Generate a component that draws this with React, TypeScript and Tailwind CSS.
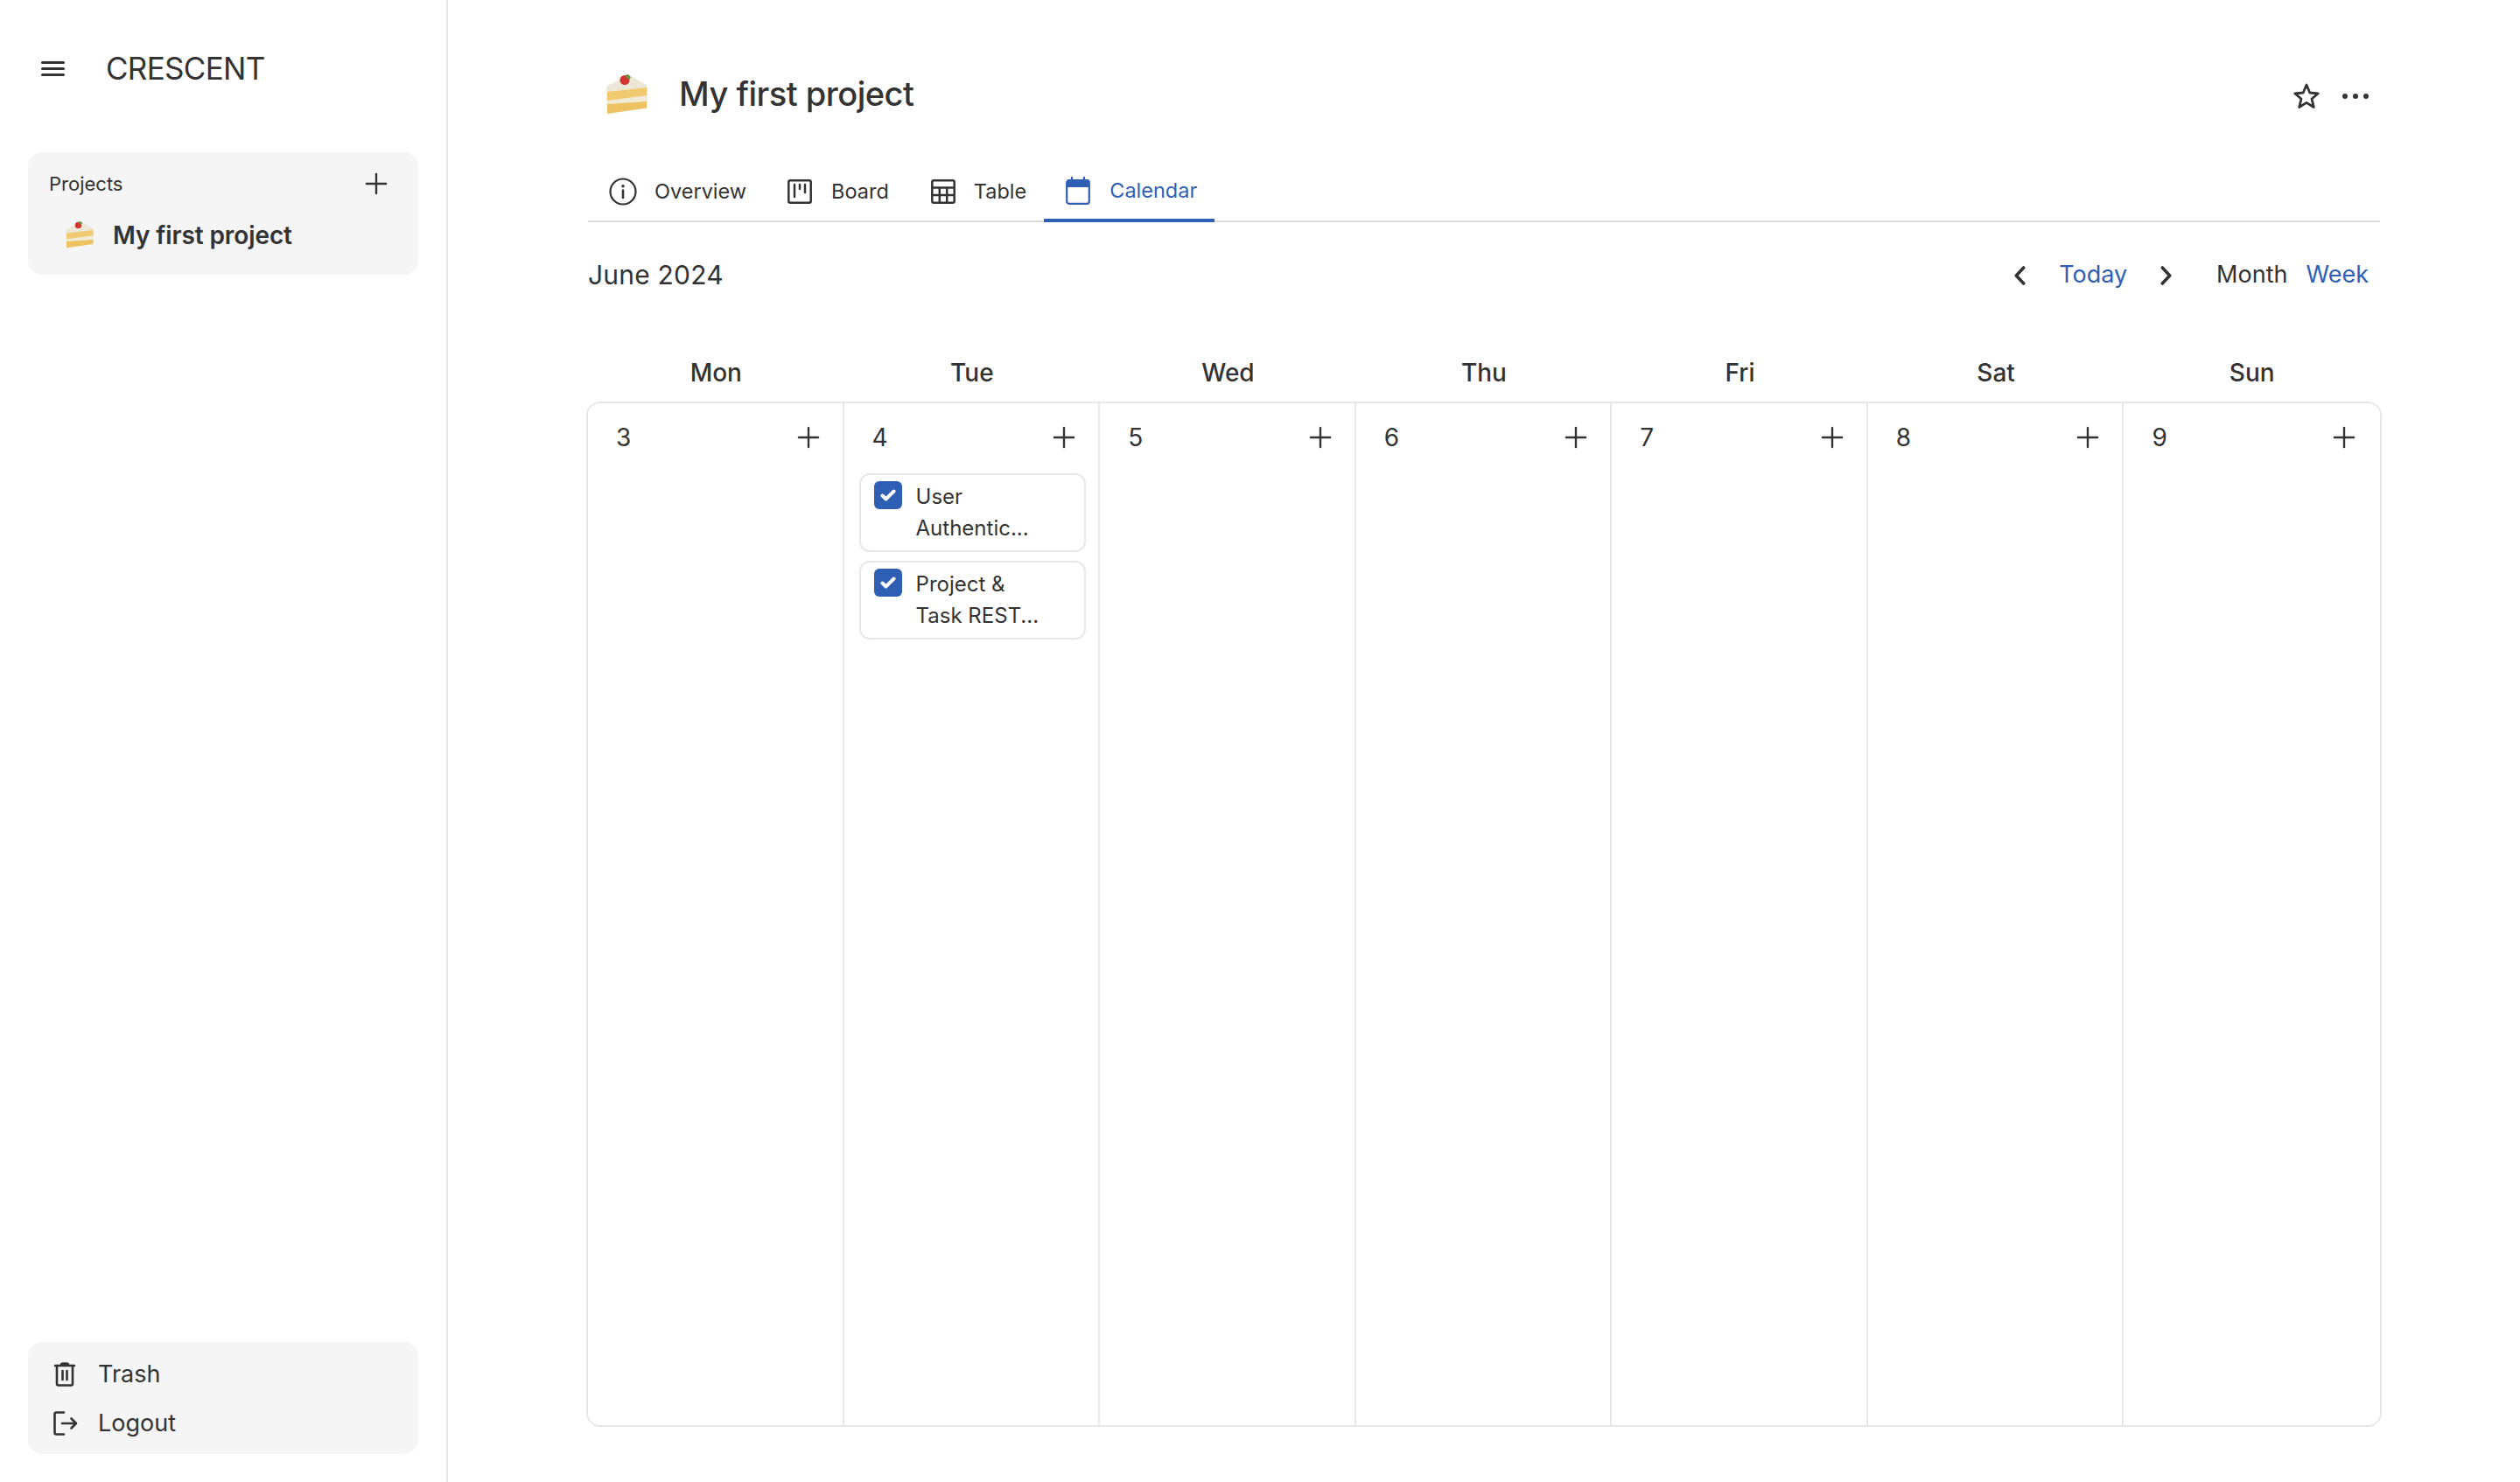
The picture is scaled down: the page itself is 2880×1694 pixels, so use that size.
import React from "react";
import { Plus } from "lucide-react";

const days = [
  { name: "Mon", date: 3 },
  { name: "Tue", date: 4 },
  { name: "Wed", date: 5 },
  { name: "Thu", date: 6 },
  { name: "Fri", date: 7 },
  { name: "Sat", date: 8 },
  { name: "Sun", date: 9 },
];

const tasks: Record<number, string[][]> = {
  4: [
    ["User", "Authentic..."],
    ["Project &", "Task REST..."],
  ],
};

function Cake({ className }: { className: string }) {
  return (
    <svg viewBox="0 0 48 46" className={className}>
      <path d="M0 14 L23 2 L30 3 L47 13 L47 38 L1 45 Z" fill="#f1ead4" />
      <path d="M0 14 L23 2 L30 3 L47 13 L46 15 L1 20 Z" fill="#ece7d6" />
      <path d="M1 20 L46 15 L46 24 L1 30 Z" fill="#f0c971" />
      <path d="M1 34 L46 31 L46 38.5 L1 45 Z" fill="#edc263" />
      <ellipse cx="21" cy="6.5" rx="5.5" ry="5.5" fill="#d2352d" />
      <path d="M21 1 L25 0 L28 3 L26 6 L23 4 Z" fill="#6b8f45" />
    </svg>
  );
}

function OverviewIcon() {
  return (
    <svg viewBox="0 0 32 32" className="w-8 h-8" fill="none" stroke="#333" strokeWidth="2.2" strokeLinecap="round">
      <circle cx="16" cy="16" r="14.5" />
      <path d="M16 14.5 V23" strokeWidth="2.6" />
      <circle cx="16" cy="9.8" r="0.7" fill="#333" />
    </svg>
  );
}

function BoardIcon() {
  return (
    <svg viewBox="0 0 28 28" className="w-7 h-7" fill="none" stroke="#333" strokeWidth="2.5" strokeLinecap="round" strokeLinejoin="round">
      <rect x="1.3" y="1.3" width="25.4" height="25.4" rx="2" />
      <path d="M8 6 V20 M14 6 V11 M20 6 V15" />
    </svg>
  );
}

function TableIcon() {
  return (
    <svg viewBox="0 0 28 28" className="w-7 h-7" fill="none" stroke="#333" strokeWidth="2.5" strokeLinejoin="round">
      <rect x="1.3" y="1.3" width="25.4" height="25.4" rx="2" />
      <path d="M1.3 9.5 H26.7 M1.3 18 H26.7 M9.8 9.5 V26.7 M18.2 9.5 V26.7" />
    </svg>
  );
}

function CalendarIcon() {
  return (
    <svg viewBox="0 0 28 32" className="w-7 h-8" fill="none">
      <rect x="1.2" y="4.2" width="25.6" height="26.6" rx="2.5" stroke="#2f5fb5" strokeWidth="2.2" />
      <path d="M1 7 Q1 3 4 3 H24 Q27 3 27 7 V12 H1 Z" fill="#2f5fb5" />
      <path d="M7 1 V4 M21 1 V4" stroke="#2f5fb5" strokeWidth="2.2" strokeLinecap="round" />
    </svg>
  );
}

function StarIcon() {
  return (
    <svg viewBox="0 0 30 30" className="w-[30px] h-[30px]" fill="none" stroke="#333" strokeWidth="2.8" strokeLinejoin="round">
      <path d="M15 2 L18.8 11 L28.3 11.8 L21 18 L23.3 27.5 L15 22.4 L6.7 27.5 L9 18 L1.7 11.8 L11.2 11 Z" />
    </svg>
  );
}

function Chevron({ dir }: { dir: "left" | "right" }) {
  return (
    <svg viewBox="0 0 13 22" className="w-[13px] h-[22px]" fill="none" stroke="#333" strokeWidth="3.6" strokeLinecap="round" strokeLinejoin="round">
      <path d={dir === "left" ? "M10.7 2 L2.3 11 L10.7 20" : "M2.3 2 L10.7 11 L2.3 20"} />
    </svg>
  );
}

function TrashIcon() {
  return (
    <svg viewBox="0 0 24 28" className="w-6 h-7" fill="none" stroke="#333" strokeWidth="2.6" strokeLinecap="round" strokeLinejoin="round">
      <path d="M1 4 H23 M8 3 Q8 1.5 10 1.5 H14 Q16 1.5 16 3" />
      <path d="M3 4 V24.5 Q3 26.5 5 26.5 H19 Q21 26.5 21 24.5 V4" />
      <path d="M9.5 10 V20 M14.5 10 V20" />
    </svg>
  );
}

function LogoutIcon() {
  return (
    <svg viewBox="0 0 28 28" className="w-7 h-7" fill="none" stroke="#333" strokeWidth="2.6" strokeLinecap="round" strokeLinejoin="round">
      <path d="M12 1.5 H3.5 Q1.5 1.5 1.5 3.5 V24.5 Q1.5 26.5 3.5 26.5 H12" />
      <path d="M10 14 H26 M20.5 8.5 L26 14 L20.5 19.5" />
    </svg>
  );
}

function TaskCard({ lines }: { lines: string[] }) {
  return (
    <div className="flex gap-4 border-2 border-[#e8e8e8] rounded-xl pl-[15px] pt-[7px] h-[90px] bg-white">
      <div className="w-8 h-8 shrink-0 rounded-md bg-[#2f5fb5] flex items-center justify-center">
        <svg viewBox="0 0 18 14" className="w-[18px] h-[14px]" fill="none" stroke="white" strokeWidth="4" strokeLinecap="round" strokeLinejoin="round">
          <path d="M2.5 7.5 L6.5 11.5 L15.5 2.5" />
        </svg>
      </div>
      <div className="text-[24px] leading-[36px] text-[#333] whitespace-nowrap">
        {lines.map((l) => (
          <div key={l}>{l}</div>
        ))}
      </div>
    </div>
  );
}

export default function App() {
  return (
    <div className="flex h-screen bg-white text-[#333] font-['Inter',sans-serif]">
      {/* Sidebar */}
      <aside className="w-[512px] shrink-0 border-r-2 border-[#e6e6e6] flex flex-col justify-between px-8 pb-8">
        <div>
          <div className="flex items-center h-[156px]">
            <div className="ml-[15px] w-[27px] flex flex-col gap-[4px]">
              <div className="h-[3px] bg-[#333] rounded-full" />
              <div className="h-[3px] bg-[#333] rounded-full" />
              <div className="h-[3px] bg-[#333] rounded-full" />
            </div>
            <span className="ml-[47px] text-[35px] leading-none tracking-[-0.7px]">CRESCENT</span>
          </div>
          <div className="bg-[#f5f5f5] rounded-2xl h-[140px] px-6 pt-[24px] mt-[18px]">
            <div className="flex items-center justify-between h-[24px] pr-[5px]">
              <span className="text-[22px]">Projects</span>
              <Plus size={38} strokeWidth={1.5} />
            </div>
            <div className="flex items-center gap-[21px] mt-[31px] pl-[19px]">
              <Cake className="w-[33px] h-[31px]" />
              <span className="text-[28px] font-semibold leading-none tracking-[-0.1px]">My first project</span>
            </div>
          </div>
        </div>
        <div className="bg-[#f5f5f5] rounded-2xl h-[128px] pl-[30px] py-[9px]">
          <div className="flex items-center gap-[26px] h-[56px] text-[27px]">
            <TrashIcon />
            <span>Trash</span>
          </div>
          <div className="flex items-center gap-[23px] h-[56px] text-[27px] -ml-[1px]">
            <LogoutIcon />
            <span>Logout</span>
          </div>
        </div>
      </aside>

      {/* Main */}
      <main className="flex-1 pl-[158px] pr-[158px] flex flex-col pb-[63px]">
        <div className="flex items-center justify-between h-[84px] mt-[66px] pl-[23px] pr-[15px]">
          <div className="flex items-center gap-[35px]">
            <Cake className="w-[48px] h-[46px]" />
            <h1 className="text-[38px] font-medium leading-none tracking-[-0.5px] -mt-[2px]">My first project</h1>
          </div>
          <div className="flex items-center gap-[26px] mt-[4px]">
            <StarIcon />
            <div className="flex gap-[6px]">
              <div className="w-[6px] h-[6px] rounded-full bg-[#333]" />
              <div className="w-[6px] h-[6px] rounded-full bg-[#333]" />
              <div className="w-[6px] h-[6px] rounded-full bg-[#333]" />
            </div>
          </div>
        </div>
        {/* Tabs */}
        <div className="flex items-start h-[68px] mt-[36px] mx-[2px] border-b-2 border-[#dcdcdc] pl-6 text-[23.5px]">
          <div className="flex items-center gap-[20px] h-[66px] mr-[47px]">
            <OverviewIcon />
            <span>Overview</span>
          </div>
          <div className="flex items-center gap-[22px] h-[66px] mr-[48px]">
            <BoardIcon />
            <span>Board</span>
          </div>
          <div className="flex items-center gap-[21px] h-[66px] mr-[20px]">
            <TableIcon />
            <span>Table</span>
          </div>
          <div className="flex items-center gap-[22px] h-[68px] pl-[25px] pr-5 border-b-4 border-[#2f5fb5] text-[#2f5fb5]">
            <CalendarIcon />
            <span>Calendar</span>
          </div>
        </div>
        {/* Toolbar */}
        <div className="flex items-center justify-between h-[120px] pl-[2px] pr-[15px]">
          <span className="text-[30px] tracking-[0.2px]">June 2024</span>
          <div className="flex items-center text-[27px] mt-[1px]">
            <Chevron dir="left" />
            <span className="ml-[38px] text-[#2f5fb5]">Today</span>
            <span className="ml-[38px]"><Chevron dir="right" /></span>
            <span className="ml-[51px]">Month</span>
            <span className="ml-[21px] text-[#2f5fb5]">Week</span>
          </div>
        </div>
        {/* Calendar */}
        <div className="grid grid-cols-7 h-[85px] pt-[35px] px-[2px] font-medium">
          {days.map((d) => (
            <div key={d.name} className="text-center leading-[34px] text-[28px]">{d.name}</div>
          ))}
        </div>
        <div className="flex-1 grid grid-cols-7 border-2 border-[#e8e8e8] rounded-2xl">
          {days.map((d, i) => (
            <div key={d.date} className={i === 6 ? "pl-[17px] pr-[14px] pt-[20px] border-r-2 border-transparent" : "pl-[17px] pr-[14px] pt-[20px] border-r-2 border-[#e8e8e8]"}>
              <div className="flex items-center justify-between h-[38px] pl-[15px] pr-[6px] text-[28px]">
                <span>{d.date}</span>
                <Plus size={38} strokeWidth={1.5} />
              </div>
              <div className="flex flex-col gap-[10px] mt-[22px]">
                {(tasks[d.date] || []).map((t) => (
                  <TaskCard key={t[0]} lines={t} />
                ))}
              </div>
            </div>
          ))}
        </div>
      </main>
    </div>
  );
}
